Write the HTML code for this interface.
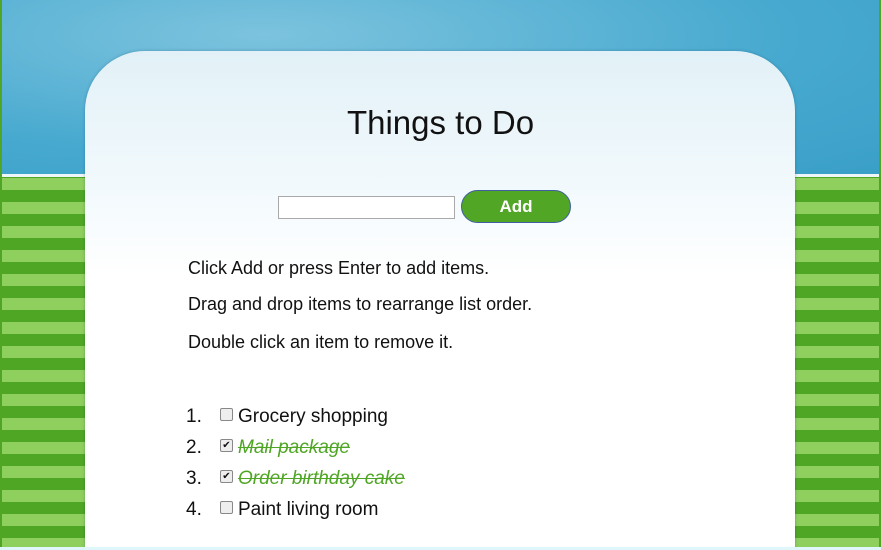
<!DOCTYPE html>
<html><head><style>
html,body{margin:0;width:881px;height:550px;overflow:hidden}
body{position:relative;font-family:"Liberation Sans",sans-serif;
background:repeating-linear-gradient(180deg,#8fcf5e 0,#8fcf5e 12px,#4fa624 12px,#4fa624 24px);background-position:0 178px}
.sky{position:absolute;left:0;top:0;width:881px;height:174px;background:radial-gradient(ellipse at 30% 20%,#7cc3de,#47a9cf 60%,#3a9fc8);border-bottom:3px solid #eef6f8}
.edge{position:absolute;right:0;top:0;width:2px;height:550px;background:#4fa624}
.edge2{position:absolute;left:0;top:0;width:2px;height:550px;background:#4fa624}
.card{position:absolute;left:85px;top:51px;width:710px;height:499px;border-radius:60px 60px 0 0;background:linear-gradient(180deg,#e2f1f7 0,#f4fafd 30%,#fff 45%);box-shadow:0 0 3px rgba(0,60,90,.3)}
h1{position:absolute;left:0;width:881px;top:104px;margin:0;text-align:center;font-size:33px;font-weight:normal;color:#111}
input{position:absolute;left:278px;top:196px;border:1px solid #a9a9a9;padding:0;box-sizing:border-box;width:177px;height:23px}
.btn{position:absolute;left:461px;top:190px;width:110px;height:33px;box-sizing:border-box;border:1px solid #3f5fa0;border-radius:17px;background:#52a626;color:#fff;font-size:17px;font-weight:bold;text-align:center;line-height:31px}
.p{position:absolute;left:188px;font-size:18px;color:#111}
.li{position:absolute;left:186px;font-size:19px;color:#111}
.li .n{display:inline-block;width:34px}
.cb{display:inline-block;width:11px;height:11px;border:1px solid #888;border-radius:2px;background:#eee;vertical-align:middle;margin-right:5px;position:relative;top:-2px;font-size:10px;line-height:11px;text-align:center}
.done{color:#4fa624;font-style:italic;text-decoration:line-through}
.bottom{position:absolute;left:0;top:547px;width:881px;height:3px;background:#dff6fb}
</style></head><body>
<div class="sky"></div><div class="edge"></div><div class="edge2"></div>
<div class="card"></div>
<h1>Things to Do</h1>
<input type="text">
<div class="btn">Add</div>
<div class="p" style="top:258px">Click Add or press Enter to add items.</div>
<div class="p" style="top:294px">Drag and drop items to rearrange list order.</div>
<div class="p" style="top:332px">Double click an item to remove it.</div>
<div class="li" style="top:406px"><span class="n">1.</span><span class="cb"></span>Grocery shopping</div>
<div class="li" style="top:437px"><span class="n">2.</span><span class="cb">✔</span><span class="done">Mail package</span></div>
<div class="li" style="top:468px"><span class="n">3.</span><span class="cb">✔</span><span class="done">Order birthday cake</span></div>
<div class="li" style="top:499px"><span class="n">4.</span><span class="cb"></span>Paint living room</div>
<div class="bottom"></div>
</body></html>
